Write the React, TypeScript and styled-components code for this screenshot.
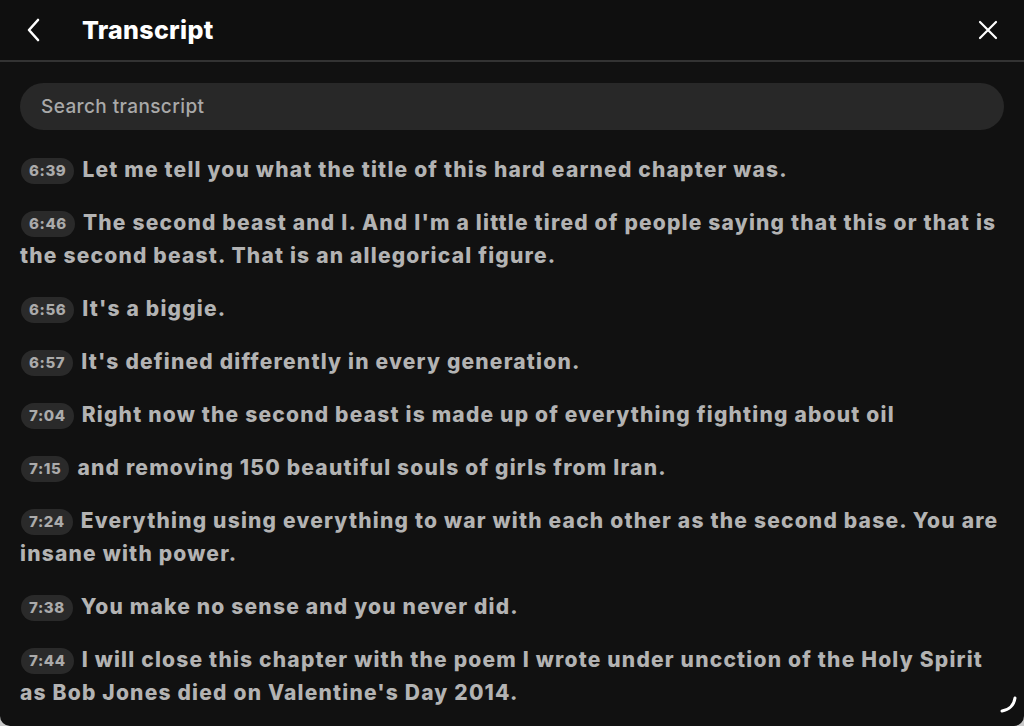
import React from "react";
import styled, { createGlobalStyle } from "styled-components";

const Global = createGlobalStyle`
  html, body { margin: 0; padding: 0; background: #c8c8c8; }
  body { font-family: Inter, "Noto Sans", sans-serif; -webkit-font-smoothing: antialiased; }
  * { box-sizing: border-box; }
`;

const Panel = styled.div`
  width: 1024px;
  height: 726px;
  background: #111111;
  border-bottom-left-radius: 10px;
  border-bottom-right-radius: 10px;
  overflow: hidden;
  display: flex;
  flex-direction: column;
  position: relative;
`;

const Header = styled.header`
  height: 62px;
  display: flex;
  align-items: center;
  padding: 0 24px 0 22px;
  border-bottom: 2px solid #333333;
  background: #0f0f0f;
`;

const IconButton = styled.button`
  background: none;
  border: 0;
  padding: 0;
  width: 24px;
  height: 24px;
  display: flex;
  align-items: center;
  justify-content: center;
  color: #fff;
  cursor: pointer;
`;

const Title = styled.h1`
  margin: 0 0 0 36px;
  flex: 1;
  color: #ffffff;
  font-size: 25px;
  font-weight: 800;
  letter-spacing: 0.3px;
`;

const Body = styled.div`
  padding: 21px 20px 0 20px;
  display: flex;
  flex-direction: column;
`;

const Search = styled.input`
  height: 47px;
  width: 984px;
  border: 0;
  border-radius: 24px;
  background: #282828;
  padding: 0 21px;
  font-family: Inter, sans-serif;
  font-size: 19px;
  font-weight: 500;
  letter-spacing: 0.4px;
  color: #ddd;
  outline: none;
  &::placeholder { color: #a9a9a9; }
`;

const List = styled.div`
  margin-top: 23px;
  display: flex;
  flex-direction: column;
  gap: 20px;
`;

const Row = styled.p`
  margin: 0;
  font-size: 21px;
  line-height: 33px;
  font-weight: 800;
  color: #b3b3b3;
  letter-spacing: 1.2px;
`;

const Stamp = styled.span`
  display: inline-block;
  vertical-align: 1px;
  height: 26px;
  line-height: 26px;
  padding: 0 8px;
  margin: 0 8px 0 1px;
  border-radius: 13px;
  background: #2a2a2a;
  color: #ababab;
  font-size: 15px;
  font-weight: 800;
  letter-spacing: 0.6px;
`;

const Handle = styled.svg`
  position: absolute;
  right: 4px;
  bottom: 12px;
`;

const rows: [string, string][] = [
  ["6:39", "Let me tell you what the title of this hard earned chapter was."],
  ["6:46", "The second beast and I. And I'm a little tired of people saying that this or that is the second beast. That is an allegorical figure."],
  ["6:56", "It's a biggie."],
  ["6:57", "It's defined differently in every generation."],
  ["7:04", "Right now the second beast is made up of everything fighting about oil"],
  ["7:15", "and removing 150 beautiful souls of girls from Iran."],
  ["7:24", "Everything using everything to war with each other as the second base. You are insane with power."],
  ["7:38", "You make no sense and you never did."],
  ["7:44", "I will close this chapter with the poem I wrote under uncction of the Holy Spirit as Bob Jones died on Valentine's Day 2014."],
];

export default function App() {
  return (
    <>
      <Global />
      <Panel>
        <Header>
          <IconButton aria-label="Back">
            <svg width="16" height="24" viewBox="0 0 16 24" fill="none">
              <path d="M12 2 L3 12 L12 22" stroke="#fff" strokeWidth="2.6" strokeLinecap="round" strokeLinejoin="round" />
            </svg>
          </IconButton>
          <Title>Transcript</Title>
          <IconButton aria-label="Close">
            <svg width="20" height="20" viewBox="0 0 20 20" fill="none">
              <path d="M2 2 L18 18 M18 2 L2 18" stroke="#fff" strokeWidth="2.2" strokeLinecap="round" />
            </svg>
          </IconButton>
        </Header>
        <Body>
          <Search placeholder="Search transcript" />
          <List>
            {rows.map(([t, text]) => (
              <Row key={t}>
                <Stamp>{t}</Stamp>
                {text}
              </Row>
            ))}
          </List>
        </Body>
        <Handle width="20" height="18" viewBox="0 0 20 18" fill="none">
          <path d="M2 15 C9 14 14 9 15 2" stroke="#fff" strokeWidth="3" strokeLinecap="round" />
        </Handle>
      </Panel>
    </>
  );
}
